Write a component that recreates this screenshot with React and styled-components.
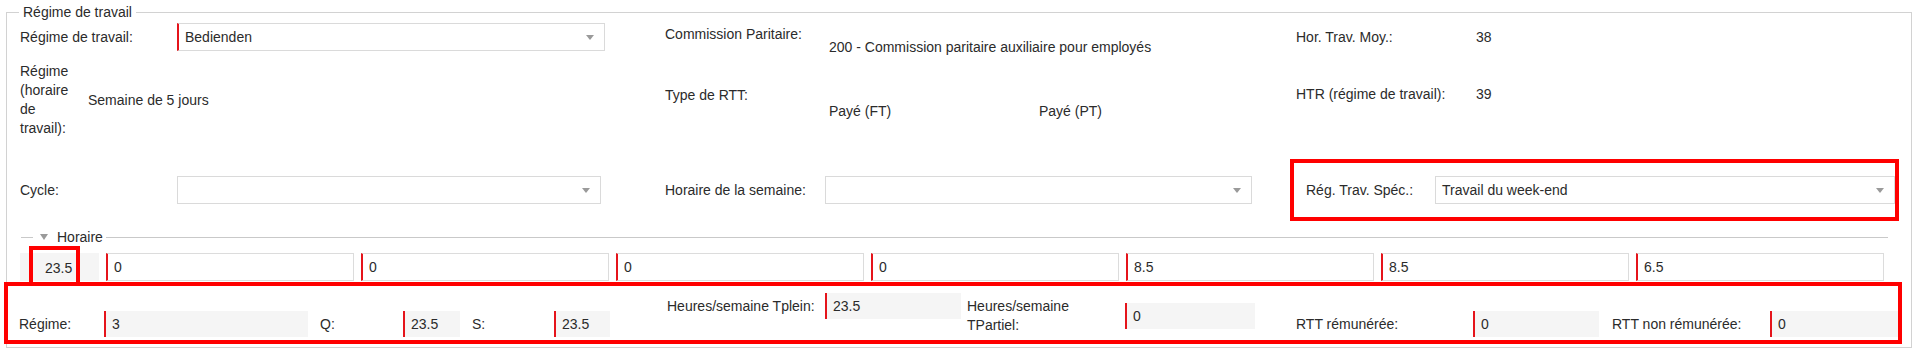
import React from 'react';
import styled, { createGlobalStyle } from 'styled-components';

const GlobalStyle = createGlobalStyle`
  html, body {
    margin: 0;
    padding: 0;
    background: #fff;
  }
  body {
    font-family: "Liberation Sans", Arial, sans-serif;
    font-size: 14px;
    color: #2b2b2b;
  }
`;

const Page = styled.div`
  width: 1914px;
  height: 355px;
  overflow: hidden;
  padding-top: 12px;
  box-sizing: border-box;
`;

const Fieldset = styled.div`
  margin-left: 6px;
  width: 1906px;
  height: 336px;
  box-sizing: border-box;
  border: 1px solid #d2d2d2;
  padding: 0 0 0 13px;
`;

const Legend = styled.div`
  width: fit-content;
  margin: -9px 0 0 -1px;
  padding: 0 4px;
  background: #fff;
  line-height: 16px;
`;

const Row = styled.div`
  display: grid;
  grid-template-columns: 645px 631px 1fr;
  height: ${({ $h }) => $h}px;
  margin-top: ${({ $mt }) => $mt}px;
`;

const Cell = styled.div`
  display: flex;
  align-items: ${({ $top }) => ($top !== undefined ? 'flex-start' : 'center')};
  padding-top: ${({ $top }) => $top || 0}px;
`;

const Label = styled.div`
  width: ${({ $w }) => $w}px;
  flex: none;
  line-height: ${({ $lh }) => $lh || 16}px;
  padding-right: ${({ $pr }) => $pr || 0}px;
  box-sizing: border-box;
  margin-top: ${({ $mt }) => $mt || 0}px;
`;

const Value = styled.div`
  line-height: 16px;
  width: ${({ $w }) => ($w ? `${$w}px` : 'auto')};
  padding-left: ${({ $pl }) => $pl || 0}px;
  margin-top: ${({ $mt }) => $mt || 0}px;
  flex: none;
`;

const SelectBox = styled.div`
  width: ${({ $w }) => $w}px;
  height: 28px;
  box-sizing: border-box;
  border: 1px solid #dadada;
  border-left: ${({ $required }) => ($required ? '2px solid #e5141b' : '1px solid #dadada')};
  background: #fff;
  display: flex;
  align-items: center;
  padding-left: 6px;
  flex: none;
`;

const Caret = styled.span`
  margin-left: auto;
  margin-right: 10px;
  width: 0;
  height: 0;
  border-left: 4px solid transparent;
  border-right: 4px solid transparent;
  border-top: 5px solid #9a9a9a;
`;

const Highlight = styled.div`
  border: 4px solid #ff0000;
  box-sizing: border-box;
`;

const SpecBox = styled(Highlight)`
  width: 609px;
  height: 62px;
  margin-left: -6px;
  display: flex;
  align-items: center;
  padding-left: 12px;
`;

const SectionHead = styled.div`
  display: flex;
  align-items: center;
  height: 16px;
  margin-top: 8px;
  margin-right: 23px;
`;

const Rule = styled.span`
  height: 1px;
  background: #c9c9c9;
  width: ${({ $w }) => ($w ? `${$w}px` : 'auto')};
  flex: ${({ $w }) => ($w ? 'none' : '1')};
  margin-left: ${({ $ml }) => $ml || 0}px;
`;

const Toggle = styled.span`
  margin: 0 9px 0 7px;
  width: 0;
  height: 0;
  border-left: 4.5px solid transparent;
  border-right: 4.5px solid transparent;
  border-top: 6px solid #9a9a9a;
`;

const HeadText = styled.span`
  line-height: 16px;
  margin-right: 3px;
`;

const HoursRow = styled.div`
  display: flex;
  gap: 7px;
  height: 28px;
  margin-top: 8px;
`;

const TotalCell = styled.div`
  position: relative;
  width: 79px;
  height: 28px;
  background: #f5f5f5;
  display: flex;
  align-items: center;
  padding: 2px 0 0 25px;
  box-sizing: border-box;
`;

const TotalMark = styled.span`
  position: absolute;
  left: 9px;
  top: -7px;
  width: 51px;
  height: 36px;
  border: 4px solid #ff0000;
  border-bottom: none;
  box-sizing: border-box;
`;

const HourInput = styled.div`
  width: 248px;
  height: 28px;
  box-sizing: border-box;
  border: 1px solid #dcdcdc;
  border-left: 2px solid #e5141b;
  padding-left: 6px;
  display: flex;
  align-items: center;
`;

const SummaryBox = styled(Highlight)`
  width: 1898px;
  height: 62px;
  margin: 1px 0 0 -16px;
  display: flex;
  padding-left: 11px;
`;

const Pair = styled.div`
  display: flex;
  align-items: center;
  height: 26px;
  margin-top: ${({ $top }) => $top}px;
  margin-left: ${({ $ml }) => $ml || 0}px;
`;

const ReadField = styled.div`
  width: ${({ $w }) => $w}px;
  height: 26px;
  box-sizing: border-box;
  background: #f5f5f5;
  border-left: 2px solid #e5141b;
  padding-left: 6px;
  display: flex;
  align-items: center;
  line-height: 16px;
`;

const hours = ['0', '0', '0', '0', '8.5', '8.5', '6.5'];

const summary = [
  { label: 'Régime:', lw: 85, value: '3', fw: 204, top: 25 },
  { label: 'Q:', lw: 83, value: '23.5', fw: 57, top: 25, ml: 12 },
  { label: 'S:', lw: 82, value: '23.5', fw: 56, top: 25, ml: 12 },
  { label: 'Heures/semaine Tplein:', lw: 158, value: '23.5', fw: 136, top: 7, ml: 57 },
  { label: 'Heures/semaine TPartiel:', lw: 158, value: '0', fw: 130, top: 17, ml: 6, lh: 19, pr: 20 },
  { label: 'RTT rémunérée:', lw: 177, value: '0', fw: 126, top: 25, ml: 41 },
  { label: 'RTT non rémunérée:', lw: 158, value: '0', fw: 128, top: 25, ml: 13 },
];

const Select = ({ width, required, children }) => (
  <SelectBox $w={width} $required={required}>
    <span>{children}</span>
    <Caret />
  </SelectBox>
);

export default function App() {
  return (
    <Page>
      <GlobalStyle />
      <Fieldset>
        <Legend>Régime de travail</Legend>

        <Row $h={32} $mt={-1}>
          <Cell>
            <Label $w={157}>Régime de travail:</Label>
            <Select width={428} required>Bedienden</Select>
          </Cell>
          <Cell $top={0}>
            <Label $w={164} $mt={7}>Commission Paritaire:</Label>
            <Value $mt={20}>200 - Commission paritaire auxiliaire pour employés</Value>
          </Cell>
          <Cell>
            <Label $w={180}>Hor. Trav. Moy.:</Label>
            <Value>38</Value>
          </Cell>
        </Row>

        <Row $h={76} $mt={11}>
          <Cell>
            <Label $w={68} $lh={19} $pr={13}>Régime (horaire de travail):</Label>
            <Value>Semaine de 5 jours</Value>
          </Cell>
          <Cell $top={0}>
            <Label $w={164} $mt={25}>Type de RTT:</Label>
            <Value $w={210} $mt={41}>Payé (FT)</Value>
            <Value $mt={41}>Payé (PT)</Value>
          </Cell>
          <Cell $top={24}>
            <Label $w={180}>HTR (régime de travail):</Label>
            <Value>39</Value>
          </Cell>
        </Row>

        <Row $h={62} $mt={21}>
          <Cell>
            <Label $w={157}>Cycle:</Label>
            <Select width={424} />
          </Cell>
          <Cell>
            <Label $w={160}>Horaire de la semaine:</Label>
            <Select width={427} />
          </Cell>
          <Cell>
            <SpecBox>
              <Label $w={129}>Rég. Trav. Spéc.:</Label>
              <Select width={460}>Travail du week-end</Select>
            </SpecBox>
          </Cell>
        </Row>

        <SectionHead>
          <Rule $w={12} $ml={1} />
          <Toggle />
          <HeadText>Horaire</HeadText>
          <Rule />
        </SectionHead>

        <HoursRow>
          <TotalCell>
            23.5
            <TotalMark />
          </TotalCell>
          {hours.map((h, i) => (
            <HourInput key={i}>{h}</HourInput>
          ))}
        </HoursRow>

        <SummaryBox>
          {summary.map((s) => (
            <Pair key={s.label} $top={s.top} $ml={s.ml}>
              <Label $w={s.lw} $lh={s.lh} $pr={s.pr}>{s.label}</Label>
              <ReadField $w={s.fw}>{s.value}</ReadField>
            </Pair>
          ))}
        </SummaryBox>
      </Fieldset>
    </Page>
  );
}
